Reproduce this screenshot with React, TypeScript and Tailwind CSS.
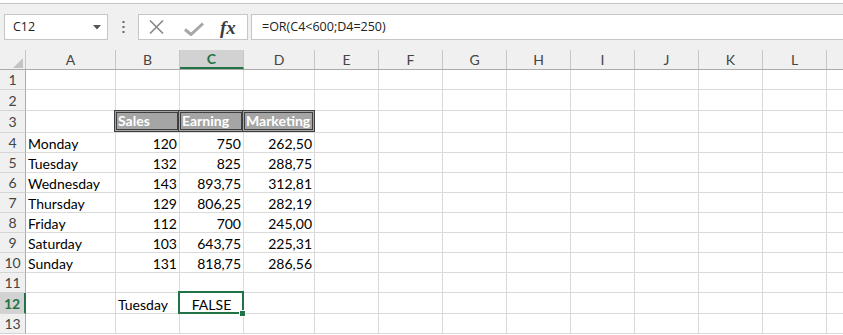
import React from 'react';

// the last column (M) is only partly in view, so its letter is left out
const COL_LETTERS = ['A', 'B', 'C', 'D', 'E', 'F', 'G', 'H', 'I', 'J', 'K', 'L', ''];
const COL_W = [
  'w-[90px]', 'w-[64px]', 'w-[64px]', 'w-[71px]', 'w-[64px]', 'w-[64px]', 'w-[64px]',
  'w-[64px]', 'w-[64px]', 'w-[64px]', 'w-[64px]', 'w-[64px]', 'w-[64px]',
];
const ROW_H = [
  'h-[20px]', 'h-[21px]', 'h-[22px]', 'h-[20px]', 'h-[20px]', 'h-[20px]', 'h-[20px]',
  'h-[20px]', 'h-[20px]', 'h-[20px]', 'h-[20px]', 'h-[21px]', 'h-[20px]',
];

const week = [
  ['Monday', '120', '750', '262,50'],
  ['Tuesday', '132', '825', '288,75'],
  ['Wednesday', '143', '893,75', '312,81'],
  ['Thursday', '129', '806,25', '282,19'],
  ['Friday', '112', '700', '245,00'],
  ['Saturday', '103', '643,75', '225,31'],
  ['Sunday', '131', '818,75', '286,56'],
];

const headers = ['Sales', 'Earning', 'Marketing'];

function CellBody({ row, col }: { row: number; col: number }) {
  // table header with the "check cell" look
  if (row === 3 && col >= 1 && col <= 3) {
    return (
      <div className="absolute -left-[2px] -right-px -top-px bottom-0 z-10 flex items-end border-[3px] border-double border-[#3f3f3f] bg-[#a5a5a5] pl-px font-bold text-white">
        <span className="leading-[16px]">{headers[col - 1]}</span>
      </div>
    );
  }
  if (row >= 4 && row <= 10) {
    const v = week[row - 4][col];
    if (v === undefined) return null;
    return (
      <div className={`flex h-full w-full items-end ${col === 0 ? 'justify-start pl-[2px]' : 'justify-end pr-[2px]'}`}>
        <span className="leading-[16px]">{v}</span>
      </div>
    );
  }
  if (row === 12 && col === 1) {
    return (
      <div className="flex h-full w-full items-end pl-[2px]">
        <span className="leading-[16px]">Tuesday</span>
      </div>
    );
  }
  if (row === 12 && col === 2) {
    return (
      <>
        <div className="flex h-full w-full items-end justify-center">
          <span className="leading-[16px]">FALSE</span>
        </div>
        <div className="absolute -left-[2px] -right-px -top-[2px] -bottom-px z-20 border-2 border-[#217346]" />
        <div className="absolute -right-[3px] -bottom-[4px] z-30 h-[7px] w-[7px] border border-white bg-[#217346]" />
      </>
    );
  }
  return null;
}

export default function App() {
  const rows = Array.from({ length: 13 }, (_, i) => i + 1);

  return (
    <div className="h-[335px] w-[843px] overflow-hidden bg-white font-['Lato',sans-serif] text-[14px] text-black">
      <div className="h-[3px] bg-white" />
      <div className="h-[11px] border-t border-[#c6c6c6] bg-[#f0f0f0]" />

      {/* formula bar */}
      <div className="flex h-[26px] bg-[#f0f0f0] font-['Open_Sans',sans-serif] text-[12.5px]">
        <div className="ml-[4px] flex w-[104px] items-center border border-[#c6c6c6] bg-white pl-[8px] pr-[6px]">
          <span className="flex-1 text-[#222]">C12</span>
          <svg width="8" height="5" viewBox="0 0 8 5">
            <path d="M0 0 L8 0 L4 4.5 Z" fill="#555" />
          </svg>
        </div>
        <div className="flex w-[30px] items-center justify-center">
          <svg width="3" height="12" viewBox="0 0 3 12">
            <rect x="0.5" y="0" width="2" height="2" fill="#666" />
            <rect x="0.5" y="5" width="2" height="2" fill="#666" />
            <rect x="0.5" y="10" width="2" height="2" fill="#666" />
          </svg>
        </div>
        <div className="flex w-[110px] items-center border border-[#c6c6c6] bg-white">
          <svg className="ml-[9px]" width="17" height="16" viewBox="0 0 17 16">
            <path d="M2 1.5 L15 14.5 M15 1.5 L2 14.5" stroke="#8a8a8a" strokeWidth="1.7" fill="none" />
          </svg>
          <svg className="ml-[19px] mt-[3px]" width="20" height="14" viewBox="0 0 20 14">
            <path d="M1 7.5 L7 12.5 L19 1.5" stroke="#a6a6a6" strokeWidth="3" fill="none" />
          </svg>
          <span className="ml-[16px] font-['Liberation_Serif',serif] text-[19px] font-bold italic leading-none text-[#3c3c3c]">
            fx
          </span>
        </div>
        <div className="ml-[3px] flex flex-1 items-center border-y border-l border-[#c6c6c6] bg-white pl-[10px] text-[#222]">
          =OR(C4&lt;600;D4=250)
        </div>
      </div>

      {/* column headers */}
      <div className="bg-[#f0f0f0]">
        <div className="h-[10px]" />
        <div className="flex h-[20px] border-b border-[#ababab] text-[#444]">
          <div className="relative w-[26px] shrink-0 border-r border-[#c6c6c6]">
            <svg className="absolute right-[2px] bottom-[1px]" width="10" height="10" viewBox="0 0 10 10">
              <path d="M10 0 L10 10 L0 10 Z" fill="#c4c4c4" />
            </svg>
          </div>
          {COL_LETTERS.map((l, c) => (
            <div
              key={c}
              className={`${COL_W[c]} flex shrink-0 items-center justify-center border-r border-[#c6c6c6] ${
                c === 2 ? 'border-b-2 border-b-[#217346] bg-[#d2d2d2] font-bold text-[#217346]' : ''
              }`}
            >
              {l}
            </div>
          ))}
        </div>
      </div>

      {/* grid */}
      {rows.map((r, i) => (
        <div key={r} className={`flex ${ROW_H[i]}`}>
          <div
            className={`flex w-[26px] shrink-0 items-center justify-center border-b border-[#d4d4d4] ${
              r === 12
                ? 'border-r-2 border-r-[#217346] bg-[#d2d2d2] font-bold text-[#217346]'
                : 'border-r border-r-[#ababab] bg-[#f0f0f0] text-[#444]'
            }`}
          >
            {r}
          </div>
          {COL_W.map((w, c) => (
            <div key={c} className={`${w} relative shrink-0 border-r border-b border-[#dadada]`}>
              <CellBody row={r} col={c} />
            </div>
          ))}
        </div>
      ))}
    </div>
  );
}
